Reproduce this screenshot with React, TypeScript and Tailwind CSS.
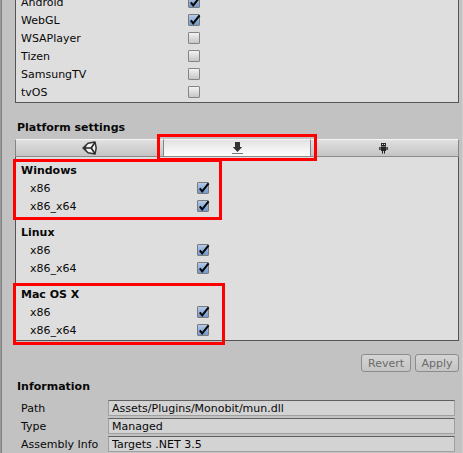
import React, { useState } from 'react';

const PLATFORMS = [
  { name: 'Android', enabled: true },
  { name: 'WebGL', enabled: true },
  { name: 'WSAPlayer', enabled: false },
  { name: 'Tizen', enabled: false },
  { name: 'SamsungTV', enabled: false },
  { name: 'tvOS', enabled: false },
];

const STANDALONE = [
  { name: 'Windows', highlight: 'w-[209px] h-[61px]' },
  { name: 'Linux', highlight: '' },
  { name: 'Mac OS X', highlight: 'w-[212px] h-[62px]' },
];

const ARCHS = ['x86', 'x86_x64'];

const INFO = [
  { label: 'Path', value: 'Assets/Plugins/Monobit/mun.dll' },
  { label: 'Type', value: 'Managed' },
  { label: 'Assembly Info', value: 'Targets .NET 3.5' },
];

const UnityIcon = () => (
  <svg width="16" height="14" viewBox="0 0 16 14" aria-hidden="true">
    <path d="M1 7 6 2.2 13 .8 14.4 7 13 13.2 6 11.8Z" fill="#f4f4f4" />
    <path
      d="M1.2 7 6 2.2 13 .9 14.2 7 13 13.1 6 11.8Z"
      fill="none"
      stroke="#333"
      strokeWidth="1.5"
      strokeLinejoin="round"
    />
    <path d="M3 7h6.2M9.2 7 12.8 1.6M9.2 7l3.6 5.4" fill="none" stroke="#262626" strokeWidth="1.7" />
    <path d="M.3 7 4.8 2.8 4 7l.8 4.2Z" fill="#333" />
  </svg>
);

const StandaloneIcon = () => (
  <svg width="11" height="12" viewBox="0 0 11 12" aria-hidden="true">
    <path d="M3 0h5v5h2.2L5.5 10 .8 5H3Z" fill="#333" />
    <path d="M0 11h11v1H0Z" fill="#777" />
  </svg>
);

const AndroidIcon = () => (
  <svg width="11" height="11" viewBox="0 0 11 11" shapeRendering="crispEdges" aria-hidden="true">
    <path d="M3 0h3v1h1v7H6v2H5V8H4v2H3V8H2V1h1Z" fill="#272727" />
    <path d="M2 0h5v8H2Z" fill="#272727" />
    <path d="M3 1h1v1H3ZM5 1h1v1H5Z" fill="#ddd" />
    <path d="M2 3h5v1H2ZM0 4h2v3H0ZM7 4h2v3H7ZM3 10h1v1H3ZM5 10h1v1H5Z" fill="#666" />
    <path d="M0 4h1v3H0ZM8 4h1v3H8Z" fill="#4b4b4b" />
  </svg>
);

const TABS = [
  { id: 'editor', label: 'Editor settings', Icon: UnityIcon },
  { id: 'standalone', label: 'Standalone settings', Icon: StandaloneIcon },
  { id: 'android', label: 'Android settings', Icon: AndroidIcon },
];

interface ToggleRowProps {
  label: string;
  defaultChecked: boolean;
  labelClass: string;
}

const ToggleRow: React.FC<ToggleRowProps> = ({ label, defaultChecked, labelClass }) => (
  <label className="flex h-[18px] items-center">
    <span className={`pt-[2px] ${labelClass}`}>{label}</span>
    <span className="relative size-3">
      <input
        type="checkbox"
        defaultChecked={defaultChecked}
        className="peer block size-3 appearance-none rounded-[1px] border border-[#858585] bg-linear-to-b from-[#f2f2f2] to-[#c6c6c6] checked:border-[#7b7b7b] checked:from-[#b5cbe9] checked:to-[#7298cc]"
      />
      <svg
        className="pointer-events-none absolute left-0 top-0 hidden overflow-visible peer-checked:block"
        width="12"
        height="12"
        viewBox="0 0 12 12"
        aria-hidden="true"
      >
        <path d="m2.8 6.3 2.4 3L11.6 1.4" fill="none" stroke="#080808" strokeWidth="2.1" />
      </svg>
    </span>
  </label>
);

const Highlight = ({ className }: { className: string }) => (
  <div className={`pointer-events-none absolute z-10 border-3 border-[#ff0000] ${className}`} />
);

const App: React.FC = () => {
  const [activeTab, setActiveTab] = useState('standalone');

  return (
    <main className="h-screen overflow-hidden border-l border-[#999] bg-[#c2c2c2] font-['DejaVu_Sans',Verdana,sans-serif] text-[11px] leading-[18px] text-[#080808]">
      <div className="flow-root h-full border-x border-l-[#828282] border-r-[#d0d0d0] pl-[13px] pr-[3px]">
        {/* Platform list, scrolled partly out of view */}
        <section className="-mt-2 border border-[#555] bg-[#dedede] pb-px pl-[5px]">
          {PLATFORMS.map(({ name, enabled }) => (
            <ToggleRow key={name} label={name} defaultChecked={enabled} labelClass="w-[167px]" />
          ))}
        </section>

        <h2 className="mt-4 pl-[2px] font-bold">Platform settings</h2>

        <section className="relative mt-[2px]">
          <div className="grid h-[18px] grid-cols-3" role="tablist">
            {TABS.map(({ id, label, Icon }) => (
              <button
                key={id}
                type="button"
                role="tab"
                aria-label={label}
                aria-selected={activeTab === id}
                onClick={() => setActiveTab(id)}
                className="flex items-center justify-center border-b border-t border-b-[#8b8b8b] border-t-[#f5f5f5] bg-linear-to-b from-[#e0e0e0] to-[#c4c4c4] first:border-l first:border-l-[#858585] last:border-r last:border-r-[#858585] aria-selected:border-x aria-selected:border-x-[#858585] aria-selected:from-[#e2e2e2] aria-selected:to-[#ffffff]"
              >
                <Icon />
              </button>
            ))}
          </div>
          <Highlight className="-top-[5px] left-[32%] h-[27px] w-[36%]" />

          <div className="flex flex-col gap-2 border border-t-0 border-[#555] bg-[#dedede] pb-px pl-[5px] pt-1">
            {STANDALONE.map(({ name, highlight }) => (
              <div key={name} role="group" aria-label={name} className="relative">
                <h3 className="flex h-[18px] items-center font-bold">
                  <span className="pt-[2px]">{name}</span>
                </h3>
                {ARCHS.map((arch) => (
                  <ToggleRow key={arch} label={arch} defaultChecked labelClass="w-[176px] pl-[9px]" />
                ))}
                {highlight && <Highlight className={`-left-2 -top-[2px] ${highlight}`} />}
              </div>
            ))}
          </div>
        </section>

        <div className="mt-[13px] flex justify-end gap-1 text-[#6a6a6a]">
          <button
            type="button"
            disabled
            className="h-[18px] w-[50px] rounded-[3px] border border-[#8c8c8c] bg-linear-to-b from-[#d5d5d5] to-[#c4c4c4] pt-px leading-4"
          >
            Revert
          </button>
          <button
            type="button"
            disabled
            className="h-[18px] w-11 rounded-[3px] border border-[#8c8c8c] bg-linear-to-b from-[#d5d5d5] to-[#c4c4c4] pt-px leading-4"
          >
            Apply
          </button>
        </div>

        <h2 className="mt-[6px] pl-[2px] font-bold">Information</h2>

        <section className="mt-1 flex flex-col gap-[2px] pl-[6px] pr-1">
          {INFO.map(({ label, value }) => (
            <label key={label} className="flex h-4 items-center">
              <span className="w-[87px] shrink-0 whitespace-nowrap pt-[2px]">{label}</span>
              <input
                type="text"
                readOnly
                defaultValue={value}
                className="h-4 min-w-0 flex-1 border border-[#a0a0a0] border-t-[#606060] bg-[#d3d3d3] px-[3px] leading-[14px] outline-none"
              />
            </label>
          ))}
        </section>
      </div>
    </main>
  );
};

export default App;
